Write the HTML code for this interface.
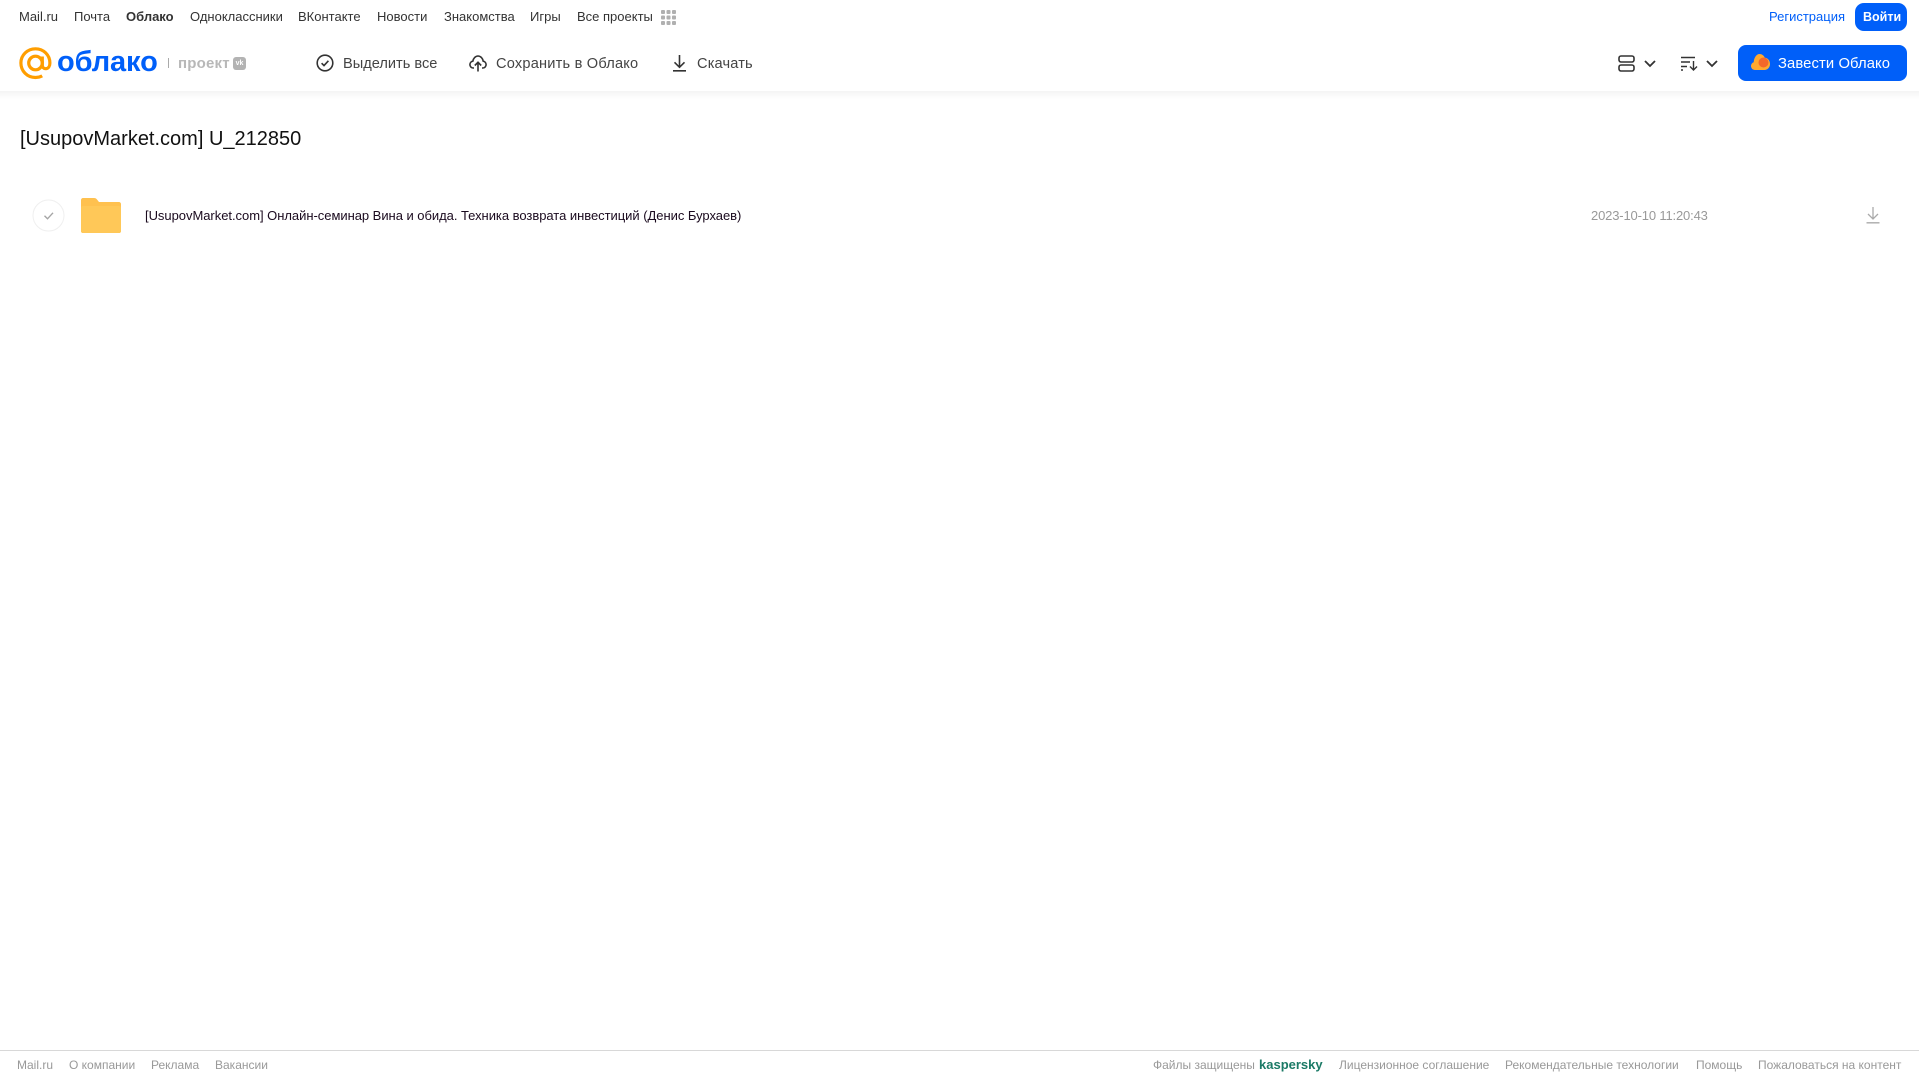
<!DOCTYPE html>
<html lang="ru"><head><meta charset="utf-8"><title>Облако</title>
<style>
html,body{margin:0;padding:0;width:1919px;height:1079px;overflow:hidden;background:#fff;font-family:"Liberation Sans",Arial,sans-serif}
.t{position:absolute;white-space:nowrap;line-height:18px}
.n{top:8px;font-size:13px;color:#333}
.b{top:54.500px;font-size:14.600px;color:#444;line-height:18px}
.f{top:1056px;font-size:12px;color:#999}
svg{position:absolute;overflow:visible}
#shade{position:absolute;left:0;top:91px;width:1919px;height:8px;background:linear-gradient(#f4f4f4,#fff)}
</style></head><body>
<div id="shade"></div>
<span class="t n" style="left:19px">Mail.ru</span>
<span class="t n" style="left:74px">Почта</span>
<span class="t n" style="left:126px;font-weight:bold">Облако</span>
<span class="t n" style="left:190px">Одноклассники</span>
<span class="t n" style="left:298px">ВКонтакте</span>
<span class="t n" style="left:377px">Новости</span>
<span class="t n" style="left:444px">Знакомства</span>
<span class="t n" style="left:530px">Игры</span>
<span class="t n" style="left:577px">Все проекты</span>
<svg style="left:661px;top:10px" width="15" height="15" fill="#b0b0b0"><rect x="0" y="0" width="4" height="4" rx="1"/><rect x="5.500" y="0" width="4" height="4" rx="1"/><rect x="11" y="0" width="4" height="4" rx="1"/><rect x="0" y="5.500" width="4" height="4" rx="1"/><rect x="5.500" y="5.500" width="4" height="4" rx="1"/><rect x="11" y="5.500" width="4" height="4" rx="1"/><rect x="0" y="11" width="4" height="4" rx="1"/><rect x="5.500" y="11" width="4" height="4" rx="1"/><rect x="11" y="11" width="4" height="4" rx="1"/></svg>
<span class="t n" style="left:1769px;color:#005ff9">Регистрация</span>
<div style="position:absolute;left:1855px;top:3px;width:52px;height:28px;border-radius:9px;background:#005ff9"></div>
<span class="t n" style="left:1863px;color:#fff;font-weight:bold;font-size:12.500px">Войти</span>

<svg style="left:19px;top:47px" width="33" height="33" viewBox="0 0 33 33" fill="none" stroke="#ff9e00" stroke-width="3.200"><circle cx="16.500" cy="16" r="6.800"/><path d="M23.300 9.500v8.600c0 2.200 1.500 3.600 3.400 3.600 2.700 0 4.200-2.600 4.200-5.700C30.900 8 24.500 1.800 16.500 1.800S1.900 8 1.900 16s6.200 14.500 14.600 14.500c2.500 0 4.700-.5 6.700-1.600"/></svg>
<span class="t" style="left:57px;top:45px;font-size:29px;line-height:34px;font-weight:bold;color:#005ff9;letter-spacing:-.1px">облако</span>
<div style="position:absolute;left:168px;top:58px;width:1px;height:10px;background:#aaa"></div>
<span class="t" style="left:178px;top:54.500px;font-size:15px;font-weight:bold;color:#b8b8b8;letter-spacing:.2px">проект</span>
<div style="position:absolute;left:233px;top:57px;width:13px;height:13px;border-radius:3px;background:#b3b3b3;color:#fff;font:bold 7px/13px 'Liberation Sans',sans-serif;text-align:center">vk</div>

<svg style="left:316px;top:54px" width="18" height="18" viewBox="0 0 18 18" fill="none" stroke="#333" stroke-width="1.600"><circle cx="9" cy="9" r="7.800"/><path d="M5.600 9.200l2.400 2.400 4.400-4.800"/></svg>
<span class="t b" style="left:343px">Выделить все</span>
<svg style="left:469px;top:55px" width="18" height="17" viewBox="0 0 18 17" fill="none" stroke="#333" stroke-width="1.600"><path d="M5 13H4.300C2.400 13 .9 11.500.9 9.600c0-1.700 1.200-3.100 2.900-3.400C4.300 3.300 6.400 1 9 1c2.700 0 4.800 2.300 5.200 5.200 1.700.3 2.900 1.700 2.900 3.400 0 1.900-1.500 3.400-3.400 3.400H13"/><path d="M9 16.500V7.500M5.800 10.500L9 7.300l3.200 3.200"/></svg>
<span class="t b" style="left:496px;letter-spacing:.2px">Сохранить в Облако</span>
<svg style="left:672px;top:54px" width="15" height="18" viewBox="0 0 15 18" fill="none" stroke="#333" stroke-width="1.600"><path d="M7.500 1v12M2.500 8.300l5 5 5-5M1 16.800h13"/></svg>
<span class="t b" style="left:697px;letter-spacing:.15px">Скачать</span>

<svg style="left:1618px;top:55px" width="17" height="17" viewBox="0 0 17 17" fill="none" stroke="#333" stroke-width="1.600"><rect x="1" y="1" width="15" height="6" rx="2"/><rect x="1" y="10" width="15" height="6" rx="2"/></svg>
<svg style="left:1644px;top:60px" width="12" height="7" viewBox="0 0 12 7" fill="none" stroke="#333" stroke-width="1.800"><path d="M1 1l5 5 5-5"/></svg>
<svg style="left:1681px;top:56px" width="17" height="15" viewBox="0 0 17 15" fill="none" stroke="#333" stroke-width="1.400"><path d="M0 1.500h14M0 6h9M0 10.500h6M0 14h2M12.500 5v9M9 10.500l3.500 3.500 3.500-3.500"/></svg>
<svg style="left:1706px;top:60px" width="12" height="7" viewBox="0 0 12 7" fill="none" stroke="#333" stroke-width="1.800"><path d="M1 1l5 5 5-5"/></svg>
<div style="position:absolute;left:1738px;top:45px;width:169px;height:36px;border-radius:8px;background:#005ff9"></div>
<svg style="left:1751px;top:54px" width="19" height="16" viewBox="0 0 19 16"><path d="M4 16C1.800 16 0 14.200 0 12c0-1.800 1.100-3.300 2.700-3.800C3 3.600 5.500 0 8.500 0c2.500 0 4.500 1.600 5.300 3.800C16.700 4 19 6.500 19 10c0 3.300-2.500 6-5.500 6z" fill="#ffa930"/><circle cx="12.500" cy="8.500" r="5" fill="#f4682a"/></svg>
<span class="t" style="left:1778px;top:54.500px;font-size:14.800px;letter-spacing:.1px;color:#fff">Завести Облако</span>

<span class="t" style="left:20px;top:126px;font-size:20px;line-height:26px;color:#111">[UsupovMarket.com] U_212850</span>

<svg style="left:32px;top:199px" width="33" height="33" viewBox="0 0 33 33" fill="none"><circle cx="16.500" cy="16.500" r="15.500" stroke="#efefef"/><path d="M12.500 16.800l3 3 5.500-6" stroke="#a5a5a5" stroke-width="1.400"/></svg>
<svg style="left:81px;top:198px" width="40" height="35" viewBox="0 0 40 35"><path d="M2 0h11c1.500 0 2.300.6 3 1.500L18 4h20c1.100 0 2 .9 2 2v27c0 1.100-.9 2-2 2H2c-1.100 0-2-.9-2-2V2C0 .9.900 0 2 0z" fill="#ffc14f"/><rect y="8" width="40" height="27" rx="2" fill="#ffc858"/></svg>
<span class="t" style="left:145px;top:207px;font-size:13px;letter-spacing:-.035px;color:#1a0a1e">[UsupovMarket.com] Онлайн-семинар Вина и обида. Техника возврата инвестиций (Денис Бурхаев)</span>
<span class="t" style="left:1591px;top:207px;font-size:13px;letter-spacing:-.16px;color:#999">2023-10-10 11:20:43</span>
<svg style="left:1866px;top:207px" width="14" height="17" viewBox="0 0 14 17" fill="none" stroke="#aaa" stroke-width="1.300"><path d="M7 0v11.500M2 7l5 5 5-5M.5 15.800h13"/></svg>

<div style="position:absolute;left:0;top:1050px;width:1919px;height:1px;background:#d8d8d8"></div>
<span class="t f" style="left:17px">Mail.ru</span>
<span class="t f" style="left:69px">О компании</span>
<span class="t f" style="left:151px">Реклама</span>
<span class="t f" style="left:215px">Вакансии</span>
<span class="t f" style="left:1153px">Файлы защищены</span>
<span class="t f" style="left:1259px;color:#1b7a66;font-weight:bold;font-size:13px">kaspersky</span>
<span class="t f" style="left:1339px">Лицензионное соглашение</span>
<span class="t f" style="left:1505px">Рекомендательные технологии</span>
<span class="t f" style="left:1696px">Помощь</span>
<span class="t f" style="left:1758px">Пожаловаться на контент</span>
</body></html>
